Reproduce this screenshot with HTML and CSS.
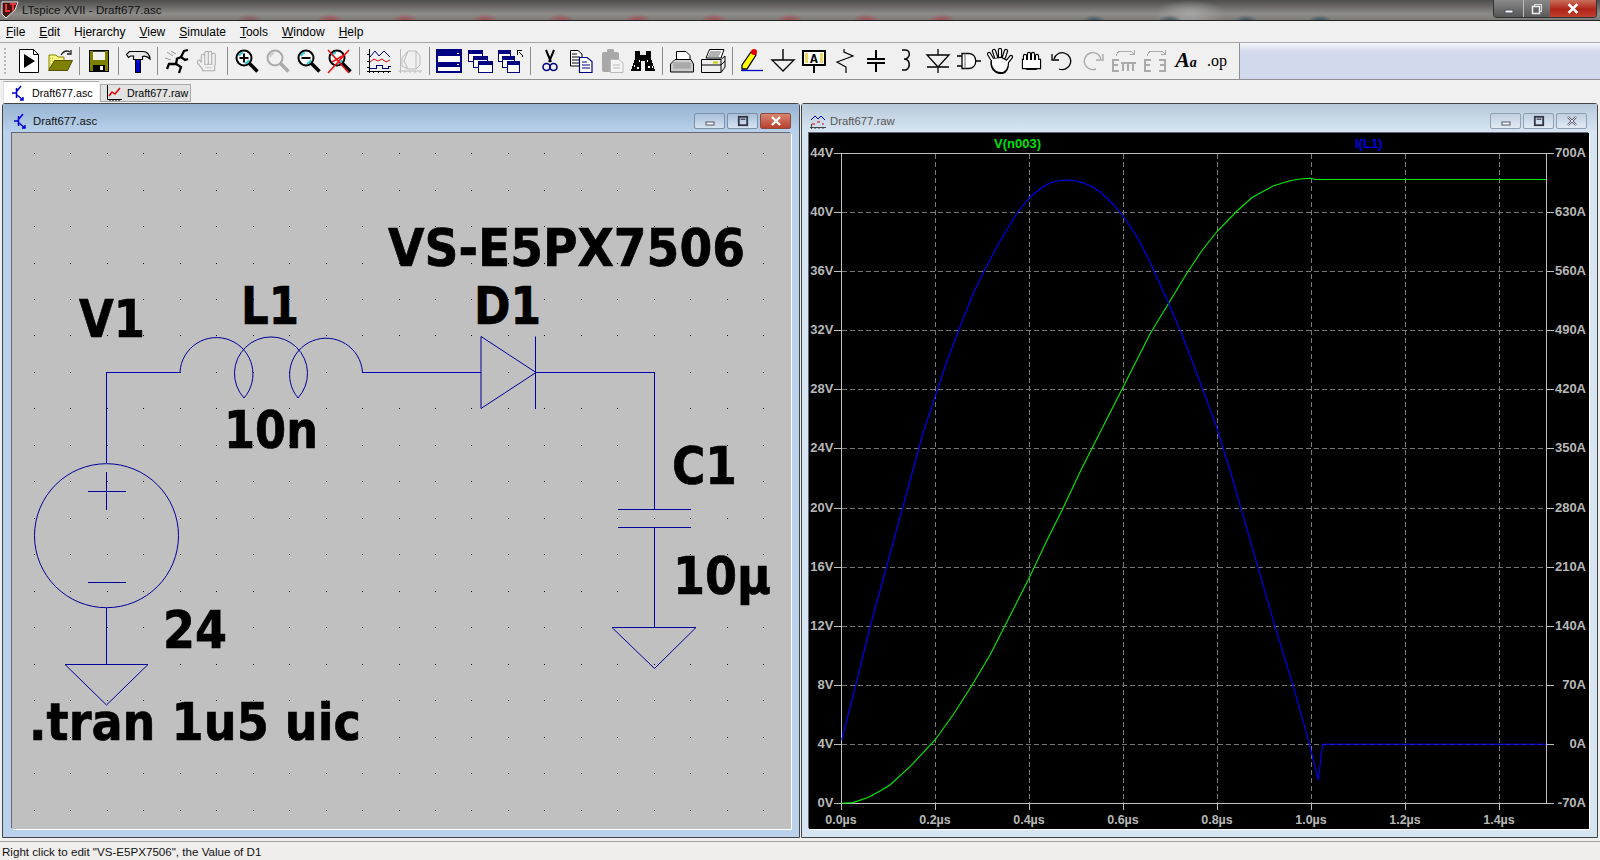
FILE: index.html
```html
<!DOCTYPE html>
<html>
<head>
<title>LTspice XVII - Draft677.asc</title>
<link rel="stylesheet" href="styles.css">
</head>
<body>

<!-- shared icon bits -->
<svg class="defs" width="0" height="0">
	<symbol id="lens" viewBox="0 0 26 26">
		<path d="M15 15L23.5 23.5" stroke="#000" stroke-width="3.5" fill="none"/>
		<circle cx="10" cy="10" r="7.5" fill="#fff" stroke="#000" stroke-width="2"/>
		<path d="M5 8A6 6 0 0 1 9 4.500M15 12A6 6 0 0 1 11 15.500" stroke="#3cd" stroke-width="2" fill="none"/>
	</symbol>
	<symbol id="gmin" viewBox="0 0 10 10"><rect x="1" y="6" width="8" height="3" fill="#f4f6f8" stroke="#556"/></symbol>
	<symbol id="gmax" viewBox="0 0 10 10"><rect x="1.500" y="1.500" width="7" height="7" fill="none" stroke="#334" stroke-width="1.500"/><rect x="3" y="3" width="4" height="1" fill="#334"/></symbol>
	<symbol id="gclose" viewBox="0 0 10 10"><path d="M1 1L9 9M9 1L1 9" stroke="#fff" stroke-width="2.400"/></symbol>
	<symbol id="gcloseoff" viewBox="0 0 10 10"><path d="M1 1L9 9M9 1L1 9" stroke="#445" stroke-width="2"/><path d="M1 1L9 9M9 1L1 9" stroke="#eef" stroke-width="1"/></symbol>
	<symbol id="fet" viewBox="0 0 14 16"><path d="M0 8H4M4.500 3V13M5 6L9 1M5 10L11 15M8 15H11V12" stroke="#0000e0" stroke-width="1.500" fill="none"/></symbol>
</svg>

<div class="titlebar">
	<svg class="applogo" width="18" height="20" viewBox="0 0 18 20">
		<path d="M1 2H17L14 10L5 18L1 14Z" fill="#411" stroke="#eee" stroke-width="1"/>
		<path d="M5 4V11H9M9 4H15M12 4V11" stroke="#e33" stroke-width="2" fill="none"/>
	</svg>
	<span class="apptitle">LTspice XVII - Draft677.asc</span>
	<div class="capbtns">
		<div class="cap capMin"><svg width="14" height="10"><use href="#gmin"/></svg></div>
		<div class="cap capMax"><svg width="12" height="12" viewBox="0 0 12 12"><rect x="3.500" y="1.500" width="7" height="7" fill="none" stroke="#ddd"/><rect x="1.500" y="3.500" width="7" height="7" fill="#666" stroke="#eee" stroke-width="1.500"/></svg></div>
		<div class="cap capClose"><svg width="12" height="11"><use href="#gclose"/></svg></div>
	</div>
</div>

<div class="menubar">
	<span><u>F</u>ile</span>
	<span><u>E</u>dit</span>
	<span>H<u>i</u>erarchy</span>
	<span><u>V</u>iew</span>
	<span><u>S</u>imulate</span>
	<span><u>T</u>ools</span>
	<span><u>W</u>indow</span>
	<span><u>H</u>elp</span>
</div>

<div class="toolbar">
	<div class="grip"></div>

	<!-- run -->
	<div class="tb"><svg width="26" height="26"><path d="M3.500 1.500H17.500L22.500 6.500V24.500H3.500Z" fill="#fff" stroke="#000"/><path d="M17.500 1.500V6.500H22.500" fill="none" stroke="#000"/><path d="M8 6L19 13L8 20Z"/></svg></div>
	<!-- open -->
	<div class="tb"><svg width="26" height="26"><path d="M2 21V7H9L11 9H17V13H8L2 21Z" fill="#ff8" stroke="#808000"/><path d="M3 10H7M3 13H6M3 16H5" stroke="#aa0" stroke-dasharray="1 1"/><path d="M1.500 22.500L7.500 12.500H25.500L20.500 22.500Z" fill="#808000" stroke="#555500"/><path d="M14 7Q18 1 23 4" fill="none" stroke="#222" stroke-width="1.300"/><path d="M20 6H24V2" fill="none" stroke="#222" stroke-width="1.300"/></svg></div>
	<div class="sep"></div>
	<!-- save -->
	<div class="tb"><svg width="26" height="26" shape-rendering="crispEdges"><rect x="3.500" y="2.500" width="19" height="21" fill="#808000" stroke="#000"/><rect x="7" y="3" width="12" height="9" fill="#f0f0f0"/><rect x="7" y="3" width="12" height="1" fill="#444"/><rect x="7" y="17" width="12" height="6" fill="#000"/><rect x="14" y="18" width="3" height="4" fill="#f0f0f0"/></svg></div>
	<div class="sep"></div>
	<!-- hammer -->
	<div class="tb"><svg width="26" height="26"><rect x="10.500" y="11.500" width="5" height="13" fill="#0000c8" stroke="#000"/><path d="M1.500 6.500L4.500 3.500H18C22 3.500 25 7 25 11C22 8 20 7.500 17.500 8.500V11.500H8.500V8H5.500L3.500 9.500Z" fill="#e8e8e8" stroke="#000" stroke-width="1.200"/></svg></div>
	<div class="sep"></div>
	<!-- halt -->
	<div class="tb"><svg width="26" height="26"><path d="M3 4L9 8M1 10L7 12M7 3L12 6" stroke="#999" fill="none"/><path d="M12 11L17 9L20 3L24 2M17 9L21 12L24 11M13 11L12 16L5 16L3 21M12 16L17 19L15 25" stroke="#000" stroke-width="2.300" fill="none"/></svg></div>
	<!-- pan hand, greyed -->
	<div class="tb"><svg width="26" height="26" fill="none" stroke-linecap="round"><path d="M8 18V8M11.500 15V5M15 15V5M18.500 16V7M8 19L4 14M9 18H18V21H9Z" stroke="#aaa" stroke-width="4.500"/><path d="M8 18V8M11.500 15V5M15 15V5M18.500 16V7M8 19L4 14M9 18H18V21H9Z" stroke="#f0f0f0" stroke-width="2.500"/></svg></div>
	<div class="sep"></div>
	<!-- zooms -->
	<div class="tb"><svg width="26" height="26"><use href="#lens"/><path d="M5.500 10H14.500M10 5.500V14.500" stroke="#000" stroke-width="2"/></svg></div>
	<div class="tb"><svg width="26" height="26" fill="none"><path d="M15 15L23.500 23.500" stroke="#aaa" stroke-width="3.500"/><circle cx="10" cy="10" r="7.500" fill="#f0f0f0" stroke="#aaa" stroke-width="2"/><path d="M5 9A6 6 0 0 1 9 5" stroke="#ccc" stroke-width="2"/></svg></div>
	<div class="tb"><svg width="26" height="26"><use href="#lens"/><path d="M5.500 10H14.500" stroke="#000" stroke-width="2"/></svg></div>
	<div class="tb"><svg width="26" height="26"><use href="#lens"/><path d="M1 2L22 25M22 2L1 25M5 14L17 7" stroke="#f01010" stroke-width="1.600"/></svg></div>
	<div class="sep"></div>
	<!-- add trace plot -->
	<div class="tb"><svg width="26" height="26" fill="none" shape-rendering="crispEdges"><path d="M1 23H25M3.500 1V25M7.500 23V25M12.500 23V25M17.500 23V25M22.500 23V25M1 6H3M1 13H3M1 19H3" stroke="#000"/><path d="M4 9L9 3L13 8L18 3L24 9" stroke="#000080" shape-rendering="auto"/><path d="M4 14L8 11L12 13L16 11L20 14L24 12" stroke="#f00000" shape-rendering="auto"/><path d="M4 20H10V17H16V20H22V18H25" stroke="#000080"/></svg></div>
	<div class="tb"><svg width="26" height="26" fill="none" stroke="#bbb"><path d="M1 23H25M3.500 1V25M8 23V25M13 23V25M18 23V25M23 23V25"/><path d="M5 10V18L11 21H19L23 17V8L19 3H11Z"/><path d="M11 3L7 13L11 21M19 3V21"/></svg></div>
	<div class="sep"></div>
	<!-- tile, cascade -->
	<div class="tb"><svg width="26" height="26" shape-rendering="crispEdges"><rect x="1" y="2" width="24" height="22" fill="#fff" stroke="#000080" stroke-width="1.500"/><rect x="1" y="3" width="24" height="5" fill="#000080"/><rect x="1" y="14" width="24" height="5" fill="#000080"/><path d="M21 5h2M21 16h2" stroke="#fff"/></svg></div>
	<div class="tb"><svg width="26" height="26" shape-rendering="crispEdges"><g fill="#fff" stroke="#000080"><rect x="1.500" y="2.500" width="14" height="11"/><rect x="6.500" y="8.500" width="14" height="11"/><rect x="11.500" y="13.500" width="14" height="11"/></g><g fill="#000080"><rect x="2" y="3" width="13" height="3"/><rect x="7" y="9" width="13" height="3"/><rect x="12" y="14" width="13" height="3"/></g></svg></div>
	<div class="tb"><svg width="26" height="26" shape-rendering="crispEdges"><g fill="#fff" stroke="#000080"><rect x="0.500" y="2.500" width="12" height="11"/><rect x="4.500" y="8.500" width="12" height="11"/><rect x="9.500" y="13.500" width="12" height="11"/></g><g fill="#000080"><rect x="1" y="3" width="11" height="3"/><rect x="5" y="9" width="11" height="3"/><rect x="10" y="14" width="11" height="3"/></g><path d="M19 2H24V3H20V7H19ZM21 4H22V5H21ZM22 5H23V6H22ZM23 6H24V7H23ZM24 7H25V9H24Z"/></svg></div>
	<div class="sep"></div>
	<!-- cut, copy, paste, find -->
	<div class="tb"><svg width="26" height="26" fill="none"><path d="M9 2L14 14M17 2L12 14" stroke="#000" stroke-width="2"/><circle cx="9.500" cy="19" r="3.500" stroke="#000080" stroke-width="1.600"/><circle cx="16.500" cy="19" r="3.500" stroke="#000080" stroke-width="1.600"/></svg></div>
	<div class="tb"><svg width="26" height="26"><path d="M2.500 2.500H10L14 6V18H2.500Z" fill="#fff" stroke="#000"/><path d="M4 6H9M4 9H12M4 12H12M4 15H12" stroke="#000"/><path d="M11.500 9.500H19L24 13.500V24.500H11.500Z" fill="#fff" stroke="#000080" stroke-width="1.200"/><path d="M14 14H19M14 17H22M14 20H22" stroke="#000080"/></svg></div>
	<div class="tb"><svg width="26" height="26"><rect x="3" y="4" width="17" height="20" rx="2" fill="#a8a8a8"/><rect x="8" y="1" width="7" height="5" rx="1" fill="#a8a8a8"/><path d="M11.500 11.500H20L24 15V24.500H11.500Z" fill="#f4f4f4" stroke="#bbb"/><path d="M14 17H21M14 20H21" stroke="#bbb"/></svg></div>
	<div class="tb"><svg width="26" height="26" shape-rendering="crispEdges"><path d="M5 3H10V7H16V3H21V10L25 23H15V13H11V23H1L5 10Z"/><path d="M4 17h1v2h-1zM9 12h1v2h-1zM7 19h2v2h-2zM18 18h2v2h-2zM17 12h1v2h-1zM22 18h1v2h-1z" fill="#fff"/></svg></div>
	<div class="sep"></div>
	<!-- print -->
	<div class="tb"><svg width="26" height="26"><path d="M7.500 3.500H17L21 7.500V12H7.500Z" fill="#fff" stroke="#000"/><path d="M6 11.500H22L24.500 16V24H1.500V16Z" fill="#ccc" stroke="#000"/><path d="M4 14H22V21H4Z" fill="#aaa" stroke="#ccc" stroke-dasharray="1 1"/></svg></div>
	<div class="tb"><svg width="26" height="26"><path d="M6 10L9.500 1.500H24L21 10Z" fill="#fff" stroke="#000"/><path d="M10 4H21M9 6H20M8 8H19" stroke="#666"/><path d="M1.500 11.500H21L25 8V19L21 24.500H1.500Z" fill="#eee" stroke="#000"/><path d="M1.500 17H21M21 11.500V24.500M21 17L25 13M13 14.500H18" stroke="#000"/><path d="M13 14.500H18" stroke="#cc0" stroke-width="2"/></svg></div>
	<div class="sep"></div>
	<!-- draft wire, ground, label, R, C, L, D, component -->
	<div class="tb"><svg width="26" height="26"><path d="M3 17L12 4L17 7L8 21L3 21Z" fill="#ff0" stroke="#000" stroke-width="1.300"/><circle cx="15" cy="4" r="3" fill="#e00000"/><path d="M2 22.500H24" stroke="#0000c0" stroke-width="1.300"/></svg></div>
	<div class="tb"><svg width="26" height="26" fill="none" stroke="#000" stroke-width="1.400"><path d="M13 1V12M2 12H24L13 23Z"/></svg></div>
	<div class="tb"><svg width="26" height="26" shape-rendering="crispEdges"><rect x="2" y="3" width="22" height="14" fill="#fff"/><rect x="2" y="3" width="22" height="14" fill="none" stroke="#000" stroke-width="2"/><path d="M4 5H7V15H4ZM19 5H22V15H19Z" fill="#e8d860"/><path d="M13 17V25" stroke="#000" stroke-width="2"/><text class="tbA" x="13" y="14.500">A</text></svg></div>
	<div class="tb"><svg width="26" height="26" fill="none" stroke="#000" stroke-width="1.200"><path d="M12 1V4L21 8L5 14L14 19V25"/></svg></div>
	<div class="tb"><svg width="26" height="26" shape-rendering="crispEdges"><path d="M12 2H14V10H12ZM12 16H14V24H12ZM4 10H22V12H4ZM4 14H22V16H4Z"/></svg></div>
	<div class="tb"><svg width="26" height="26" fill="none" stroke="#000" stroke-width="1.500"><path d="M8 2H11C16 2 17 8 12 11H10C16 11 17 19 12 22H8"/></svg></div>
	<div class="tb"><svg width="26" height="26" fill="none" stroke="#000" stroke-width="1.300"><path d="M13 1V7M13 19V25M2 7H24L13 19ZM2 19H24"/></svg></div>
	<div class="tb"><svg width="26" height="26" fill="none" stroke="#000" stroke-width="1.300"><path d="M1 8H7M1 18H7M20 13H25"/><path d="M6 5.500H13C22 5.500 22 20.500 13 20.500H6Z" fill="#fff"/><path d="M9 5.500V20.500" stroke="#888"/></svg></div>
	<div class="tb"><svg width="26" height="26" fill="none" stroke-linecap="round"><path d="M5 11L2 6M9 9L7 3M13 8L13 2M17 9L19 3M20 14L24 9M6 12C4 20 9 24 14 24C19 24 20 20 20 14L14 11Z" stroke="#000" stroke-width="4.300"/><path d="M5 11L2 6M9 9L7 3M13 8L13 2M17 9L19 3M20 14L24 9" stroke="#fff" stroke-width="2"/><path d="M6 12C5 19 9 23 14 23C18 23 20 19 20 14L14 11Z" stroke="#fff" stroke-width="2" fill="#fff"/></svg></div>
	<div class="tb"><svg width="26" height="26" fill="none" stroke-linecap="round"><path d="M7 8V12M11 6V12M15 6V12M19 8V12M6 13L21 13L21 19H6Z" stroke="#000" stroke-width="4.300"/><path d="M7 8V12M11 6V12M15 6V12M19 8V12M6 13L21 13L21 19H6Z" stroke="#fff" stroke-width="2" fill="#fff"/><path d="M9 21H18" stroke="#000" stroke-width="2"/></svg></div>
	<!-- undo, redo, move, drag, text, directive -->
	<div class="tb"><svg width="26" height="26" fill="none" stroke="#000" stroke-width="1.300"><path d="M5 11A8.500 8.500 0 1 1 10 21" stroke="#000"/><path d="M3 6V12H10"/></svg></div>
	<div class="tb"><svg width="26" height="26" fill="none" stroke="#aaa" stroke-width="1.400"><path d="M21 11A8.500 8.500 0 1 0 16 21"/><path d="M23 6V12H16"/></svg></div>
	<div class="tb"><svg width="26" height="26" shape-rendering="crispEdges"><g fill="#aaa"><path d="M1 11H8V13H3V16H7V18H3V22H8V24H1Z"/><path d="M10 14H25V16H23V23H21V16H18V23H16V16H13V23H11V16H10Z"/></g><path d="M5 8L8 3H20L23 6M23 2V6H19" fill="none" stroke="#aaa" stroke-width="1"/></svg></div>
	<div class="tb"><svg width="26" height="26" shape-rendering="crispEdges"><g fill="#aaa"><path d="M2 11H9V13H4V16H8V18H4V22H9V24H2Z"/><path d="M17 11H24V24H17V22H22V18H18V16H22V13H17Z"/></g><path d="M5 8L8 3H20L23 6M23 2V6H19" fill="none" stroke="#aaa" stroke-width="1"/></svg></div>
	<div class="tb"><span class="tbAa">A<span class="tbAa2">a</span></span></div>
	<div class="tb"><span class="tbOp">.op</span></div>
	<div class="tbEnd"></div>
</div>

<div class="tabbar">
	<div class="tab tabOn"><svg width="14" height="16"><use href="#fet"/></svg><span>Draft677.asc</span></div>
	<div class="tab tabOff">
		<svg width="16" height="16" fill="none"><path d="M1.500 0V14.500H16M4 14.500V16M7 14.500V16M10 14.500V16M13 14.500V16" stroke="#000"/><path d="M3 11L6 7L9 9L14 3" stroke="#e00000" stroke-width="1.500"/></svg>
		<span>Draft677.raw</span>
	</div>
</div>

<div class="mdi">
	<!-- schematic window -->
	<div class="win winOn">
		<div class="wintitle">
			<svg width="14" height="16"><use href="#fet"/></svg>
			<span class="wintext">Draft677.asc</span>
			<div class="winbtns">
				<div class="wbtn"><svg width="12" height="10"><use href="#gmin"/></svg></div>
				<div class="wbtn"><svg width="12" height="12"><use href="#gmax"/></svg></div>
				<div class="wbtn wbtnClose"><svg width="12" height="10"><use href="#gclose"/></svg></div>
			</div>
		</div>
		<div class="winbody">
			<svg class="pane schematic" width="779" height="696" viewBox="12 133 779 696">
				<path class="dots" d="M34 153.500H765M34 190.500H765M34 226.500H765M34 263.500H765M34 299.500H765M34 335.500H765M34 372.500H765M34 408.500H765M34 445.500H765M34 481.500H765M34 518.500H765M34 554.500H765M34 591.500H765M34 627.500H765M34 664.500H765M34 700.500H765M34 737.500H765M34 773.500H765M34 810.500H765"/>

				<!-- wires -->
				<path class="wire" d="M106.500 463V372.500H180M362 372.500H481M536 372.500H654.500V509M654.500 528V627M106.500 608V664"/>
				<!-- V1 -->
				<circle class="part" cx="106.500" cy="535.700" r="72"/>
				<path class="part" d="M88 491.500H126M106.500 472V510M88 582.500H126"/>
				<!-- L1 -->
				<path class="part" d="M180 372A36.500 36.500 0 1 1 244 398A36.500 36.500 0 1 1 298 398A36.500 36.500 0 1 1 362.500 372"/>
				<!-- D1 -->
				<path class="part" d="M481 336.500V408.500L536 372.500ZM535.500 336.500V409"/>
				<!-- C1 -->
				<path class="part" d="M618 509.500H691M618 527.500H691"/>
				<!-- grounds -->
				<path class="part" d="M65 664.500H148L106.500 705ZM612 627.500H696L654.500 668.500Z"/>

				<text class="big" x="388" y="265.500" textLength="357" lengthAdjust="spacingAndGlyphs">VS-E5PX7506</text>
				<text class="big" x="79" y="337" textLength="66" lengthAdjust="spacingAndGlyphs">V1</text>
				<text class="big" x="241" y="323.500" textLength="58" lengthAdjust="spacingAndGlyphs">L1</text>
				<text class="big" x="474" y="323.500" textLength="67" lengthAdjust="spacingAndGlyphs">D1</text>
				<text class="big" x="224" y="448" textLength="94" lengthAdjust="spacingAndGlyphs">10n</text>
				<text class="big" x="163" y="648" textLength="64" lengthAdjust="spacingAndGlyphs">24</text>
				<text class="big" x="672" y="484" textLength="65" lengthAdjust="spacingAndGlyphs">C1</text>
				<text class="big" x="673" y="594" textLength="98" lengthAdjust="spacingAndGlyphs">10µ</text>
				<text class="big" x="29" y="740" textLength="332" lengthAdjust="spacingAndGlyphs">.tran 1u5 uic</text>
			</svg>
		</div>
	</div>

	<!-- waveform window -->
	<div class="win winOff">
		<div class="wintitle">
			<svg width="16" height="16" fill="none"><path d="M0 14.500H16M1.500 16V11M5 16V14M9 16V14M13 16V14" stroke="#444"/><path d="M1 7L5 3L8 6L11 3L15 7" stroke="#0000d0"/><path d="M2 11H5M7 9H10M12 11H14" stroke="#e00000"/></svg>
			<span class="wintext wintextOff">Draft677.raw</span>
			<div class="winbtns">
				<div class="wbtn"><svg width="12" height="10"><use href="#gmin"/></svg></div>
				<div class="wbtn"><svg width="12" height="12"><use href="#gmax"/></svg></div>
				<div class="wbtn"><svg width="12" height="10"><use href="#gcloseoff"/></svg></div>
			</div>
		</div>
		<div class="winbody winbodyPlot">
			<svg class="pane plot" width="780" height="696" viewBox="809 133 780 696">
				<path class="grid" d="M842 212.500H1546M842 271.500H1546M842 330.500H1546M842 389.500H1546M842 448.500H1546M842 508.500H1546M842 567.500H1546M842 626.500H1546M842 685.500H1546M842 744.500H1546"/>
				<path class="grid" d="M935.500 154V803M1029.500 154V803M1123.500 154V803M1217.500 154V803M1311.500 154V803M1405.500 154V803M1499.500 154V803"/>
				<path class="axis" d="M834 153.500H1554M841.500 153.500V810M1546.500 153.500V803.500M834 803.500H1554"/>
				<path class="axis" d="M834 212.500H841M834 271.500H841M834 330.500H841M834 389.500H841M834 448.500H841M834 508.500H841M834 567.500H841M834 626.500H841M834 685.500H841M834 744.500H841"/>
				<path class="axis" d="M1547 212.500H1554M1547 271.500H1554M1547 330.500H1554M1547 389.500H1554M1547 448.500H1554M1547 508.500H1554M1547 567.500H1554M1547 626.500H1554M1547 685.500H1554M1547 744.500H1554"/>
				<path class="axis" d="M935.500 803V810M1029.500 803V810M1123.500 803V810M1217.500 803V810M1311.500 803V810M1405.500 803V810M1499.500 803V810"/>

				<polyline class="trGreen" points="841.700,803.300 853,802.600 868,797.500 880,791 890,785 910,766.700 935,740 953,715 972,685.300 990,655 1007,621.700 1029,578.300 1048,538.300 1063,508.300 1081,470 1092,448.300 1122,389.300 1150,334 1170,301 1187,273 1202,250.500 1217,231.500 1237,211 1252,197.500 1273,186 1290,180.700 1300,179 1311,178.300 1315,179.500 1546,179.500"/>
				<polyline class="trBlue" points="841.700,740 856,684 870,627 887,565 902,510 913,470 923,433 935,397 947,361 960,326.700 973,294 984,271 1000,241 1018,211.700 1030,197 1043,186.700 1050,183 1057,181 1068,180 1076,181 1083,182.700 1092,186.500 1100,191.700 1113,204 1123,216 1137,236.700 1150,261.700 1158,280 1168,301.700 1180,330 1190,355 1203,390 1217,428 1223,448 1230,470 1241,508.300 1258,567.300 1275,626.300 1293,685.300 1309.500,744.300 1318.300,780 1322.700,744.300 1546,744.300"/>

				<text class="trName trNameV" x="994" y="148">V(n003)</text>
				<text class="trName trNameI" x="1355" y="148">I(L1)</text>

				<g class="lblLeft">
					<text x="833.500" y="157">44V</text>
					<text x="833.500" y="216">40V</text>
					<text x="833.500" y="275">36V</text>
					<text x="833.500" y="334">32V</text>
					<text x="833.500" y="393">28V</text>
					<text x="833.500" y="452">24V</text>
					<text x="833.500" y="512">20V</text>
					<text x="833.500" y="571">16V</text>
					<text x="833.500" y="630">12V</text>
					<text x="833.500" y="689">8V</text>
					<text x="833.500" y="748">4V</text>
					<text x="833.500" y="807">0V</text>
				</g>
				<g class="lblRight">
					<text x="1586" y="157">700A</text>
					<text x="1586" y="216">630A</text>
					<text x="1586" y="275">560A</text>
					<text x="1586" y="334">490A</text>
					<text x="1586" y="393">420A</text>
					<text x="1586" y="452">350A</text>
					<text x="1586" y="512">280A</text>
					<text x="1586" y="571">210A</text>
					<text x="1586" y="630">140A</text>
					<text x="1586" y="689">70A</text>
					<text x="1586" y="748">0A</text>
					<text x="1586" y="807">-70A</text>
				</g>
				<g class="lblBottom">
					<text x="841" y="824">0.0µs</text>
					<text x="935" y="824">0.2µs</text>
					<text x="1029" y="824">0.4µs</text>
					<text x="1123" y="824">0.6µs</text>
					<text x="1217" y="824">0.8µs</text>
					<text x="1311" y="824">1.0µs</text>
					<text x="1405" y="824">1.2µs</text>
					<text x="1499" y="824">1.4µs</text>
				</g>
			</svg>
		</div>
	</div>
</div>

<div class="statusbar">Right click to edit "VS-E5PX7506", the Value of D1</div>

</body>
</html>
```
FILE: styles.css
```css
html, body {
	margin: 0;
	height: 860px;
	overflow: hidden;
}
body {
	display: flex;
	flex-direction: column;
	background-color: #f0f0f0;
	font-family: "Liberation Sans", Arial, sans-serif;
	font-size: 12px;
	color: #000;
}
svg {
	display: block;
	flex: none;
}
.defs {
	position: absolute;
}

/* app caption, blurred desktop behind it */
.titlebar {
	height: 20px;
	flex: none;
	display: flex;
	align-items: flex-start;
	border-bottom: 1px solid #222;
	background:
		radial-gradient(ellipse 14px 7px at 561px 21px, #a8484c, transparent),
		radial-gradient(ellipse 14px 7px at 638px 21px, #a8484c, transparent),
		radial-gradient(ellipse 14px 7px at 714px 21px, #a8484c, transparent),
		radial-gradient(ellipse 14px 7px at 790px 21px, #a8484c, transparent),
		radial-gradient(ellipse 14px 7px at 866px 21px, #a8484c, transparent),
		radial-gradient(ellipse 14px 7px at 942px 21px, #a8484c, transparent),
		radial-gradient(ellipse 14px 7px at 250px 21px, #8a5456, transparent),
		radial-gradient(ellipse 14px 7px at 330px 21px, #a8484c, transparent),
		radial-gradient(ellipse 14px 7px at 405px 21px, #a8484c, transparent),
		radial-gradient(ellipse 14px 7px at 485px 21px, #a8484c, transparent),
		radial-gradient(ellipse 12px 6px at 1094px 21px, #33505f, transparent),
		radial-gradient(ellipse 12px 6px at 1170px 21px, #33505f, transparent),
		radial-gradient(ellipse 12px 6px at 1246px 21px, #33505f, transparent),
		radial-gradient(ellipse 12px 6px at 1320px 21px, #33505f, transparent),
		radial-gradient(ellipse 35px 14px at 1190px 14px, #a5a5a5, transparent),
		linear-gradient(#4c4c4c, #8e8c88 70%, #7c7a78);
}
.applogo {
	margin: 0 3px 0 1px;
}
.apptitle {
	font-size: 11.6px;
	line-height: 20px;
	color: #111;
}
.capbtns {
	margin-left: auto;
	margin-right: 3px;
	display: flex;
	height: 17px;
	border: 1px solid #333;
	border-top: none;
	border-radius: 0 0 4px 4px;
	overflow: hidden;
}
.cap {
	display: flex;
	align-items: center;
	justify-content: center;
}
.capMin {
	width: 29px;
	background: linear-gradient(#8a8a8a, #555);
}
.capMax {
	width: 26px;
	background: linear-gradient(#888, #5a5a5a);
	border-left: 1px solid #bbb;
}
.capClose {
	width: 46px;
	background: linear-gradient(#c8705c, #b02418 55%, #c04030);
}

.menubar {
	height: 21px;
	flex: none;
	display: flex;
	align-items: center;
	gap: 14px;
	padding-left: 6px;
	border-bottom: 1px solid #a8a8a8;
}

.toolbar {
	height: 36px;
	flex: none;
	display: flex;
	align-items: center;
	padding-left: 4px;
	border-bottom: 1px solid #909090;
}
.grip {
	width: 2px;
	height: 26px;
	margin-right: 7.5px;
	background: repeating-linear-gradient(#b8b8b8 0 2px, transparent 2px 4px);
}
.tb {
	width: 31px;
	height: 34px;
	flex: none;
	display: flex;
	align-items: center;
	justify-content: center;
}
.sep {
	width: 1px;
	height: 28px;
	margin: 0 3.5px;
	flex: none;
	background-color: #8e8e8e;
}
.tbA {
	font-family: "Liberation Mono", monospace;
	font-weight: bold;
	font-size: 13px;
	text-anchor: middle;
}
.tbAa {
	font-family: "Liberation Serif", serif;
	font-style: italic;
	font-weight: bold;
	font-size: 22px;
	line-height: 26px;
}
.tbAa2 {
	font-size: 14px;
}
.tbOp {
	font-family: "Liberation Serif", serif;
	font-size: 16px;
	line-height: 26px;
}
.tbEnd {
	align-self: stretch;
	flex: 1;
	margin-left: 6.500px;
	border-left: 1px solid #909090;
	background: linear-gradient(#f4f6fa, #d3d9ec 9px);
}

.tabbar {
	height: 23px;
	flex: none;
	display: flex;
	align-items: flex-start;
	padding-left: 3px;
	gap: 1px;
}
.tab {
	display: flex;
	align-items: center;
	box-sizing: border-box;
}
.tab span {
	font-size: 10.7px;
}
.tabOn {
	width: 96px;
	height: 23px;
	margin-top: 1px;
	padding-left: 8px;
	gap: 6px;
	background-color: #fff;
	border-top: 1px solid #aaa;
	border-left: 1px solid #ddd;
	color: #000;
}
.tabOff {
	width: 91px;
	height: 18px;
	margin-top: 4px;
	padding-left: 5px;
	gap: 5px;
	background-color: #e2e2e2;
	border: 1px solid #aaa;
}

.mdi {
	flex: 1;
	min-height: 0;
	display: flex;
	gap: 1px;
	padding: 0 2px 3px 2px;
}
.win {
	box-sizing: border-box;
	display: flex;
	flex-direction: column;
	border: 1px solid #444;
	border-radius: 3px 3px 0 0;
}
.winOn {
	width: 798px;
	background-color: #b9d1ea;
}
.winOff {
	width: 797px;
	background-color: #d7e4f2;
}
.wintitle {
	box-sizing: border-box;
	height: 29px;
	flex: none;
	display: flex;
	align-items: center;
	padding: 4px 2px 0 11px;
	gap: 5px;
}
.winOn .wintitle {
	background: linear-gradient(#98b4d2, #bad2ec);
}
.winOff .wintitle {
	background: linear-gradient(#b8cad9, #d9e6f3);
	padding-left: 8px;
}
.wintext {
	font-size: 11.3px;
	color: #111;
}
.wintextOff {
	color: #555;
	margin-left: -1px;
}
.winbtns {
	margin-left: auto;
	display: flex;
	gap: 2px;
	padding-right: 6px;
}
.winOff .winbtns {
	padding-right: 8px;
}
.wbtn {
	width: 29px;
	height: 14px;
	display: flex;
	align-items: center;
	justify-content: center;
	border: 1px solid #7b8fa6;
	border-radius: 2px;
	background: linear-gradient(#a8bfd8, #d6e4f2);
}
.winOff .wbtn {
	background: linear-gradient(#c0d0e0, #e0eaf4);
	border-color: #90a0b0;
}
.wbtnClose {
	background: linear-gradient(#d88672, #b8402e);
	border-color: #8a4a40;
}
.winbody {
	flex: 1;
	min-height: 0;
	padding: 0 8px 8px 9px;
}
.winbodyPlot {
	padding: 0 8px 8px 7px;
}
.pane {
	box-shadow: 1px 1px 0 #fff, -1px -1px 0 #667;
}

/* schematic drawing */
.schematic {
	background-color: #c0c0c0;
}
.dots {
	fill: none;
	stroke: #000;
	stroke-dasharray: 1 35.45;
	shape-rendering: crispEdges;
}
.wire {
	fill: none;
	stroke: #0000b0;
	shape-rendering: crispEdges;
}
.part {
	fill: none;
	stroke: #00009a;
}
.big {
	font-family: "DejaVu Sans", sans-serif;
	font-weight: bold;
	font-size: 52px;
	fill: #000;
	stroke: #000;
	stroke-width: 0.7px;
}

/* waveform drawing */
.plot {
	background-color: #000;
}
.grid {
	fill: none;
	stroke: #787878;
	stroke-dasharray: 5 3;
	shape-rendering: crispEdges;
}
.axis {
	fill: none;
	stroke: #c0c0c0;
	shape-rendering: crispEdges;
}
.trGreen, .trBlue {
	fill: none;
	stroke-width: 1.1;
}
.trGreen {
	stroke: #00f000;
}
.trBlue {
	stroke: #0000ff;
}
.trName, .lblLeft, .lblRight, .lblBottom {
	font-family: "Liberation Sans", Arial, sans-serif;
	font-weight: bold;
	font-size: 13px;
}
.trNameV {
	fill: #00e000;
}
.trNameI {
	fill: #0000e8;
}
.lblLeft, .lblRight, .lblBottom {
	fill: #b8b8b8;
}
.lblLeft, .lblRight {
	text-anchor: end;
}
.lblBottom {
	text-anchor: middle;
	font-size: 12.5px;
}

.statusbar {
	height: 18px;
	flex: none;
	border-top: 1px solid #a0a0a0;
	background-color: #f0eded;
	padding-left: 2px;
	font-size: 11.6px;
	line-height: 19px;
	color: #111;
	white-space: nowrap;
}
```
